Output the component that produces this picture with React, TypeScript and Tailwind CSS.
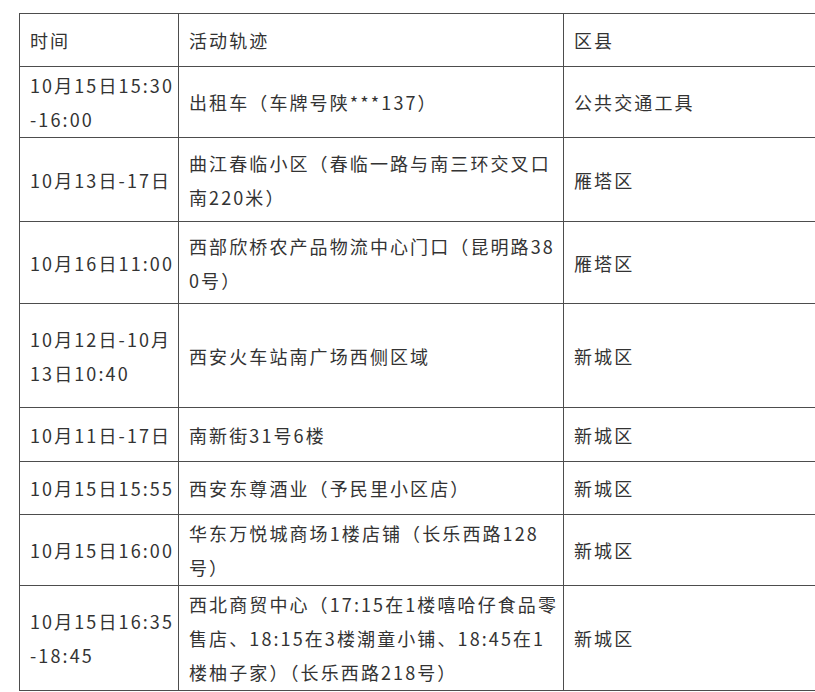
const rows: { time: React.ReactNode; place: React.ReactNode; area: string; h: string }[] = [
  { time: <>10月15日15:30<br />-16:00</>, place: "出租车（车牌号陕***137）", area: "公共交通工具", h: "h-[71px]" },
  { time: "10月13日-17日", place: <>曲江春临小区（春临一路与南三环交叉口<br />南220米）</>, area: "雁塔区", h: "h-[84px]" },
  { time: "10月16日11:00", place: <>西部欣桥农产品物流中心门口（昆明路38<br />0号）</>, area: "雁塔区", h: "h-[82px]" },
  { time: <>10月12日-10月<br />13日10:40</>, place: "西安火车站南广场西侧区域", area: "新城区", h: "h-[104px]" },
  { time: "10月11日-17日", place: "南新街31号6楼", area: "新城区", h: "h-[54px]" },
  { time: "10月15日15:55", place: "西安东尊酒业（予民里小区店）", area: "新城区", h: "h-[53px]" },
  { time: "10月15日16:00", place: <>华东万悦城商场1楼店铺（长乐西路128<br />号）</>, area: "新城区", h: "h-[71px]" },
  {
    time: <>10月15日16:35<br />-18:45</>,
    place: <>西北商贸中心（17:15在1楼嘻哈仔食品零<br />售店、18:15在3楼潮童小铺、18:45在1<br />楼柚子家）（长乐西路218号）</>,
    area: "新城区",
    h: "h-[105px]",
  },
];

export default function App() {
  return (
    <div className="w-[815px] h-[692px] overflow-hidden bg-white pl-[19px] pt-[13px] font-['Noto_Sans_CJK_SC','Noto_Sans',sans-serif] text-[18px] leading-[34px] tracking-[2.1px] text-[#333]">
      <table className="table-fixed border-collapse w-[880px]">
        <colgroup>
          <col className="w-[159px]" />
          <col className="w-[385px]" />
          <col className="w-[336px]" />
        </colgroup>
        <thead>
          <tr className="h-[53px]">
            <th className="border-[1.5px] border-[#4d4d4d] px-[10px] text-left font-normal align-middle">时间</th>
            <th className="border-[1.5px] border-[#4d4d4d] px-[10px] text-left font-normal align-middle">活动轨迹</th>
            <th className="border-[1.5px] border-[#4d4d4d] px-[10px] text-left font-normal align-middle">区县</th>
          </tr>
        </thead>
        <tbody>
          {rows.map((r, i) => (
            <tr key={i} className={r.h}>
              <td className="border-[1.5px] border-[#4d4d4d] px-[10px] align-middle whitespace-nowrap">{r.time}</td>
              <td className="border-[1.5px] border-[#4d4d4d] px-[10px] align-middle whitespace-nowrap">{r.place}</td>
              <td className="border-[1.5px] border-[#4d4d4d] px-[10px] align-middle">{r.area}</td>
            </tr>
          ))}
        </tbody>
      </table>
    </div>
  );
}
